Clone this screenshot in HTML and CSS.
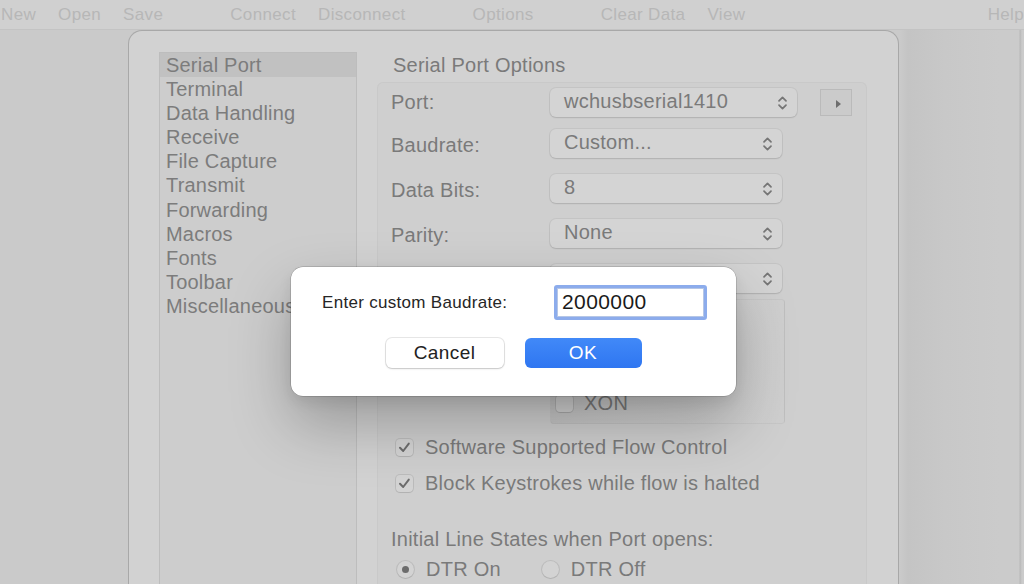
FILE: index.html
```html
<!DOCTYPE html>
<html>
<head>
<meta charset="utf-8">
<link rel="stylesheet" href="styles.css">
</head>
<body>
<div class="toolbar">
  <span class="tb">New</span>
  <span class="tb">Open</span>
  <span class="tb">Save</span>
  <span class="tb grp">Connect</span>
  <span class="tb">Disconnect</span>
  <span class="tb grp">Options</span>
  <span class="tb grp">Clear Data</span>
  <span class="tb">View</span>
  <span class="tb help">Help</span>
</div>
<div class="main">
  <div class="sheet">
    <div class="list">
      <div class="item sel">Serial Port</div>
      <div class="item">Terminal</div>
      <div class="item">Data Handling</div>
      <div class="item">Receive</div>
      <div class="item">File Capture</div>
      <div class="item">Transmit</div>
      <div class="item">Forwarding</div>
      <div class="item">Macros</div>
      <div class="item">Fonts</div>
      <div class="item">Toolbar</div>
      <div class="item">Miscellaneous</div>
    </div>
    <div class="pane">
      <div class="title">Serial Port Options</div>
      <div class="group">
        <div class="row r1">
          <span class="lbl">Port:</span>
          <div class="select wide"><span>wchusbserial1410</span>
            <svg class="chev" width="11" height="18" viewBox="0 0 11 18"><path d="M2 6.8 L5.5 3.3 L9 6.8 M2 11.2 L5.5 14.7 L9 11.2"/></svg>
          </div>
          <div class="stepper"><svg width="8" height="10" viewBox="0 0 8 10"><path d="M2 1 L7 5 L2 9 Z"/></svg></div>
        </div>
        <div class="row r2">
          <span class="lbl">Baudrate:</span>
          <div class="select"><span>Custom...</span>
            <svg class="chev" width="11" height="18" viewBox="0 0 11 18"><path d="M2 6.8 L5.5 3.3 L9 6.8 M2 11.2 L5.5 14.7 L9 11.2"/></svg>
          </div>
        </div>
        <div class="row r3">
          <span class="lbl">Data Bits:</span>
          <div class="select"><span>8</span>
            <svg class="chev" width="11" height="18" viewBox="0 0 11 18"><path d="M2 6.8 L5.5 3.3 L9 6.8 M2 11.2 L5.5 14.7 L9 11.2"/></svg>
          </div>
        </div>
        <div class="row r3">
          <span class="lbl">Parity:</span>
          <div class="select"><span>None</span>
            <svg class="chev" width="11" height="18" viewBox="0 0 11 18"><path d="M2 6.8 L5.5 3.3 L9 6.8 M2 11.2 L5.5 14.7 L9 11.2"/></svg>
          </div>
        </div>
        <div class="row r3">
          <span class="lbl">Stop Bits:</span>
          <div class="select"><span>1</span>
            <svg class="chev" width="11" height="18" viewBox="0 0 11 18"><path d="M2 6.8 L5.5 3.3 L9 6.8 M2 11.2 L5.5 14.7 L9 11.2"/></svg>
          </div>
        </div>
        <div class="flowbox">
          <div class="check small"><span class="box"></span><span>XON</span></div>
        </div>
        <div class="check first"><span class="box on"><svg width="17" height="17" viewBox="0 0 17 17"><path d="M4 8.8 L7.2 12 L12.8 4.6"/></svg></span><span>Software Supported Flow Control</span></div>
        <div class="check second"><span class="box on"><svg width="17" height="17" viewBox="0 0 17 17"><path d="M4 8.8 L7.2 12 L12.8 4.6"/></svg></span><span>Block Keystrokes while flow is halted</span></div>
        <div class="subhead">Initial Line States when Port opens:</div>
        <div class="radios">
          <div class="radio"><span class="dot on"></span><span>DTR On</span></div>
          <div class="radio"><span class="dot"></span><span>DTR Off</span></div>
        </div>
      </div>
    </div>
  </div>
  <div class="dialog">
    <div class="drow">
      <span class="dlbl">Enter custom Baudrate:</span>
      <div class="input">2000000</div>
    </div>
    <div class="btns">
      <div class="btn cancel">Cancel</div>
      <div class="btn ok">OK</div>
    </div>
  </div>
</div>
</body>
</html>
```
FILE: styles.css
```css
* { box-sizing: border-box; }
html, body { margin: 0; padding: 0; }
body {
  width: 1024px;
  height: 584px;
  overflow: hidden;
  background: #cacaca;
  font-family: "Liberation Sans", Arial, sans-serif;
  position: relative;
}
.toolbar {
  height: 30px;
  background: #d0d0d0;
  border-bottom: 1px solid #c3c3c3;
  display: flex;
  align-items: center;
  gap: 22px;
  font-size: 17px;
  letter-spacing: 0.35px;
  color: #b7b7b7;
  padding-left: 1px;
  white-space: nowrap;
}
.tb.grp { margin-left: 45px; }
.tb.help { margin-left: auto; margin-right: 0; }
.main {
  height: 554px;
  background: linear-gradient(to right, #cacaca 0, #cacaca 900px, #c4c4c4 908px, #c8c8c8 945px, #cbcbcb 1000px, #cbcbcb 1019px, #b8b8b8 1020px, #cbcbcb 1022px);
}
.sheet {
  margin-left: 128px;
  width: 771px;
  height: 554px;
  border: 1px solid #a8a8a8;
  border-bottom: none;
  border-radius: 14px 14px 0 0;
  background: #d2d2d2;
  padding: 21px 0 0 30px;
  display: flex;
}
.list {
  width: 198px;
  flex: none;
  border: 1px solid #bdbdbd;
  border-bottom: none;
  background: #cdcdcd;
}
.item {
  font-size: 20px;
  letter-spacing: 0.2px;
  line-height: 24.1px;
  padding-left: 6px;
  color: #7c7c7c;
  white-space: nowrap;
}
.item.sel { background: #c1c1c1; }
.pane {
  margin-left: 20px;
  width: 490px;
  display: flex;
  flex-direction: column;
}
.title {
  font-size: 20px;
  letter-spacing: 0.25px;
  line-height: 26px;
  height: 30px;
  padding-left: 16px;
  color: #7a7a7a;
}
.group {
  flex: 1;
  border: 1px solid #c9c9c9;
  border-bottom: none;
  border-radius: 6px 6px 0 0;
  background: #cfcfcf;
  padding: 5px 0 0 13px;
  color: #7a7a7a;
  font-size: 20px;
  letter-spacing: 0.25px;
}
.row {
  display: flex;
  align-items: center;
  height: 29px;
}
.row.r2 { margin-top: 12px; }
.row.r3 { margin-top: 16px; }
.lbl {
  width: 159px;
  flex: none;
  padding-top: 4px;
}
.row.r1 .lbl { padding-top: 0; }
.select {
  width: 232px;
  height: 29px;
  border-radius: 6px;
  background: #d4d4d4;
  box-shadow: 0 0 0 1px rgba(0,0,0,0.05), 0 1px 1.5px rgba(0,0,0,0.1);
  display: flex;
  align-items: center;
  justify-content: space-between;
  padding: 0 9px 0 14px;
  color: #7a7a7a;
}
.select span { margin-top: -2px; }
.select.wide { width: 247px; }
.chev path { fill: none; stroke: #757575; stroke-width: 1.7; stroke-linecap: round; stroke-linejoin: round; }
.stepper {
  margin-left: 23px;
  width: 32px;
  height: 27px;
  background: #cbcbcb;
  border: 1px solid #bababa;
  display: flex;
  align-items: center;
  justify-content: center;
  padding: 3px 0 0 4px;
}
.stepper path { fill: #6e6e6e; }
.flowbox {
  margin: 6px 0 0 159px;
  width: 235px;
  height: 125px;
  border: 1px solid rgba(0,0,0,0.035);
  border-radius: 4px;
  background: linear-gradient(to right, #c6c6c6 0, #c9c9c9 40px, #cdcdcd 120px, #cfcfcf 235px);
  padding: 91px 0 0 5px;
}
.check {
  display: flex;
  align-items: center;
  height: 24px;
  gap: 12px;
  padding-left: 5px;
  white-space: nowrap;
}
.check.small { padding-left: 0; gap: 11px; }
.check.first { margin-top: 11px; }
.check.second { margin-top: 12px; }
.box {
  width: 17px;
  height: 17px;
  border-radius: 4px;
  background: #d3d3d3;
  box-shadow: 0 0 0 1px rgba(0,0,0,0.09), 0 1px 1px rgba(0,0,0,0.06);
  flex: none;
  display: flex;
}
.box path { fill: none; stroke: #6c6c6c; stroke-width: 2; stroke-linecap: round; stroke-linejoin: round; }
.subhead {
  margin-top: 32px;
  line-height: 24px;
  white-space: nowrap;
}
.radios {
  margin-top: 6px;
  display: flex;
  gap: 41px;
  padding-left: 6px;
}
.radio {
  display: flex;
  align-items: center;
  gap: 12px;
  height: 24px;
}
.dot {
  width: 17px;
  height: 17px;
  border-radius: 50%;
  background: #d3d3d3;
  box-shadow: 0 0 0 1px rgba(0,0,0,0.09), 0 1px 1px rgba(0,0,0,0.06);
  display: flex;
  align-items: center;
  justify-content: center;
}
.dot.on::after {
  content: "";
  width: 7px;
  height: 7px;
  border-radius: 50%;
  background: #6c6c6c;
}
.dialog {
  position: absolute;
  left: 291px;
  top: 267px;
  width: 445px;
  height: 129px;
  background: #ffffff;
  border-radius: 12px;
  box-shadow: 0 0 0 0.5px rgba(0,0,0,0.25), 0 28px 60px rgba(0,0,0,0.26), 0 6px 14px rgba(0,0,0,0.08);
  padding: 18px 0 0 31px;
}
.drow {
  display: flex;
  align-items: center;
  height: 35px;
}
.dlbl {
  font-size: 17px;
  letter-spacing: 0.3px;
  color: #262626;
  width: 232px;
  flex: none;
  white-space: nowrap;
}
.input {
  width: 153px;
  height: 35px;
  border: 3px solid #8cacec;
  border-radius: 3px;
  box-shadow: inset 0 0 0 1px #b5c6e6;
  font-size: 21px;
  letter-spacing: 0.4px;
  color: #1a1a1a;
  padding-left: 5px;
  line-height: 28px;
}
.btns {
  display: flex;
  justify-content: center;
  gap: 21px;
  margin: 18px 0 0 -31px;
}
.btn {
  width: 118px;
  height: 30px;
  border-radius: 6px;
  font-size: 19px;
  letter-spacing: 0.4px;
  display: flex;
  align-items: center;
  justify-content: center;
}
.cancel {
  background: #fff;
  color: #222;
  box-shadow: 0 0 0 1px rgba(0,0,0,0.09), 0 1px 2px rgba(0,0,0,0.15);
}
.ok {
  width: 117px;
  background: linear-gradient(#4189f8, #2f76f1);
  color: #fff;
}
```
